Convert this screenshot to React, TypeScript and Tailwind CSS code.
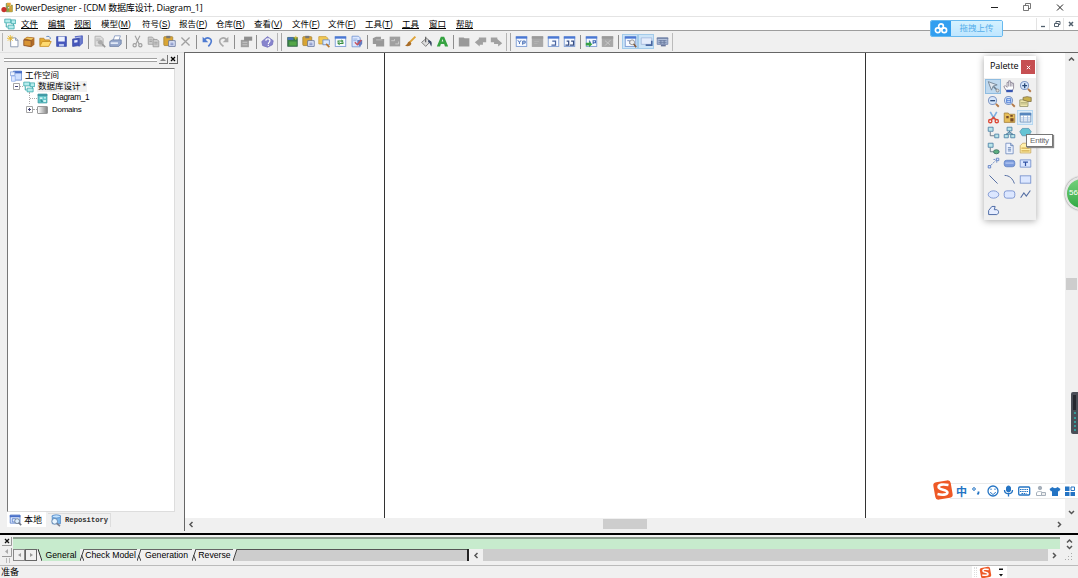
import type { ReactNode } from 'react';
import { clsx } from 'clsx';

const uiFont = "font-['Open_Sans','Noto_Sans_CJK_SC',sans-serif]";
const arial = "font-['Liberation_Sans','Noto_Sans_CJK_SC',sans-serif]";

function Svg({ children, size = 'w-[14px] h-[14px]' }: { children: ReactNode; size?: string }) {
  return (
    <svg viewBox="0 0 16 16" className={clsx('shrink-0', size)} fill="none">
      {children}
    </svg>
  );
}

const win = (inner: ReactNode, gray = false) => (
  <>
    <rect x="1.5" y="2" width="13" height="12" fill={gray ? '#a8a8a8' : '#f7faff'} stroke={gray ? '#a0a0a0' : '#6e91cf'} />
    <path d="M1 3.200h14" stroke={gray ? '#999' : '#4a78d4'} strokeWidth="2.600" />
    {inner}
  </>
);

const clipboard = (
  <>
    <rect x="1" y="2" width="11" height="11" rx="1" fill="#d9a534" stroke="#a5843a" />
    <path d="M4 1h5v3H4z" fill="#777" />
    <path d="M7 7h8v7H7z" fill="#e9efff" stroke="#5a6b96" />
    <path d="M9 10h4M9 12h4" stroke="#56a" />
  </>
);

const magnifier = (inner: ReactNode) => (
  <>
    <circle cx="6.800" cy="6.800" r="5" fill="#d5e6fb" stroke="#8098c4" strokeWidth="1.300" />
    <path d="M11 11l3.500 3.500" stroke="#b37a4a" strokeWidth="2.300" />
    {inner}
  </>
);

const icons: Record<string, ReactNode> = {
  // file group
  new: (
    <>
      <path d="M4.5 3.5h6l3 3v8h-9z" fill="#fff" stroke="#7c8ba8" />
      <path d="M10.5 3.5v3h3" stroke="#7c8ba8" />
      <path d="M4 0v8M0 4h8M1 1l6 6M7 1L1 7" stroke="#e8b51e" />
    </>
  ),
  project: (
    <>
      <path d="M1 5l4-3 9 1v9l-4 3-9-2z" fill="#b06c28" />
      <path d="M1 6l9 1v7l-9-1z" fill="#d99434" stroke="#8b532d" />
      <path d="M2 4l4-1 7 1-3 2z" fill="#efc65c" />
    </>
  ),
  open: (
    <>
      <path d="M1 13V4h5l1 2h6v3" fill="#e5ac32" stroke="#b9822c" />
      <path d="M1 14l3-6h11l-3 6z" fill="#ffdb70" stroke="#c58b20" />
      <path d="M9 2c3-1 5 0 5 3" stroke="#4779bd" />
    </>
  ),
  save: (
    <>
      <path d="M2 2h12v12H2z" fill="#4657bd" stroke="#4355ad" />
      <path d="M4 2h8v6H4z" fill="#eef3ff" />
      <path d="M5 11h6v3H5z" fill="#b9c6ee" />
    </>
  ),
  saveAll: (
    <>
      <path d="M5 2l9-1v9l-4 4z" fill="#6d7dcc" stroke="#4657bd" />
      <path d="M2 5l8-1v9l-8 1z" fill="#4657bd" stroke="#404fa2" />
      <path d="M4 6.500l4-.5v3l-4 .5z" fill="#e8edff" />
      <path d="M5 3.500l7-1" stroke="#c6d0f5" />
    </>
  ),
  preview: (
    <>
      <path d="M2.5 1.5h7l3 3v9h-10z" fill="#ddd" stroke="#aaa" />
      <path d="M4 5h5M4 7h3" stroke="#aaa" />
      <circle cx="9" cy="9" r="3" fill="#aaa" />
      <path d="M11 11l4 4" stroke="#999" strokeWidth="2" />
    </>
  ),
  print: (
    <>
      <path d="M5 7l2-6h7l-2 6z" fill="#fff" stroke="#7e93bd" />
      <path d="M1 8l3-2h11v5l-3 3H1z" fill="#97a9cd" stroke="#6d7fa4" />
      <path d="M2 10h9" stroke="#e6edf9" strokeWidth="2" />
    </>
  ),
  cutGray: (
    <>
      <path d="M5 1l5 10M11 1L6 11" stroke="#a0a0a0" strokeWidth="1.4" />
      <circle cx="4.5" cy="12.5" r="2" stroke="#a0a0a0" strokeWidth="1.5" />
      <circle cx="11.5" cy="12.5" r="2" stroke="#a0a0a0" strokeWidth="1.5" />
    </>
  ),
  copy: (
    <>
      <path d="M1.5 2.5h5l2 2v7h-7z" fill="#ccc" stroke="#a0a0a0" />
      <path d="M7.5 5.5h5l2 2v7h-7z" fill="#ccc" stroke="#979797" />
      <path d="M9 9h4M9 11h4M3 6h3M3 8h3" stroke="#999" />
    </>
  ),
  paste: clipboard,
  remove: <path d="M3 3l10 10M13 3L3 13" stroke="#a0a0a0" strokeWidth="1.6" />,
  undo: (
    <>
      <path d="M4 6c4-5 11-1 8 4-1 2-2 3-3 4" stroke="#4f7bd1" strokeWidth="2" />
      <path d="M2 2v7h7z" fill="#4f7bd1" />
    </>
  ),
  redo: (
    <>
      <path d="M12 6C8 1 1 5 4 10c1 2 3 3 4 4" stroke="#aaa" strokeWidth="2" />
      <path d="M14 2v7H7z" fill="#aaa" />
    </>
  ),
  properties: (
    <>
      <path d="M1 6h10v9H1z" fill="#a0a0a0" />
      <path d="M5 2h10v5H5z" fill="#8e8e8e" />
      <path d="M3 9h6M3 12h6" stroke="#ccc" />
    </>
  ),
  help: (
    <>
      <path d="M1 8l7-6 7 5-1 5-6 3-6-2z" fill="#8784cd" stroke="#7572be" />
      <path d="M6 7c0-3 5-3 5 0 0 2-2 2-2 4M9 12v1.5" stroke="#fff" strokeWidth="1.4" />
    </>
  ),
  // model group
  greenModel: (
    <>
      <path d="M2 3h12v11H2z" fill="#387e45" stroke="#416f56" />
      <path d="M4 8h9v5H4z" fill="#54a748" />
      <path d="M2 3h7v3H2z" fill="#4771bd" />
      <path d="M12 1v5M9.500 3.500h5" stroke="#e7c430" />
    </>
  ),
  folderSearch: (
    <>
      <path d="M1 2h9l2 2v7H1z" fill="#f2c955" stroke="#c99b35" />
      <path d="M6 6h8v6H6z" fill="#dceaff" stroke="#6489c5" />
      <path d="M10 11l4 4" stroke="#b67834" strokeWidth="2" />
    </>
  ),
  refresh: win(
    <>
      <path d="M5 9.500V7.500h4M11 8.500v2H7" stroke="#368d3b" strokeWidth="1.300" />
      <path d="M9 5.500l3 2-3 2zM7 8.500l-3 2 3 2z" fill="#368d3b" />
    </>,
  ),
  check: (
    <>
      <path d="M2.5 1.5h8l2 2v11h-10z" fill="#dbe7ff" stroke="#6f93d2" />
      <path d="M4 5h5M4 7h4" stroke="#88a8dc" />
      <path d="M9 6h6v5l-3 3-3-3z" fill="#637dc2" />
      <path d="M6 9l3 3 5-6" stroke="#c7545f" strokeWidth="1.800" />
    </>
  ),
  grayStack: (
    <>
      <path d="M1 4l4-2h6v3h4v9H5v-3H1z" fill="#989898" />
      <path d="M5 6h8" stroke="#c5c5c5" />
    </>
  ),
  grayImage: (
    <>
      <path d="M2 2h13v12H2z" fill="#a0a0a0" />
      <path d="M4 7h4V5M9 11h4V8" stroke="#d4d4d4" />
    </>
  ),
  brush: (
    <>
      <path d="M14 2L6 10" stroke="#dfa338" strokeWidth="2.5" />
      <path d="M7 8c-3 0-2 4-6 5 4 2 8 0 8-3z" fill="#a96d28" />
    </>
  ),
  bucket: (
    <>
      <path d="M2 9l6-5 5 4-6 6z" fill="#ddd" stroke="#666" />
      <path d="M7 9V2" stroke="#555" strokeWidth="1.300" />
      <path d="M10 6c5 1 5 4 4 8-2-2-1-4-4-5z" fill="#3f4c68" />
    </>
  ),
  letterA: <path d="M1 14L6 2h4l5 12h-4l-1-3H6l-1 3zM7 8h2L8 5z" fill="#36a342" />,
  grayFolder: <path d="M1 3h6l1 1h6v10H1z" fill="#999" />,
  grayLeft: <path d="M6 3h9v6h-4v3H7v2L1 9l5-4z" fill="#a1a1a1" />,
  grayRight: <path d="M1 3h8v2l6 5-5 4v-3H5V9H1z" fill="#a1a1a1" />,
  // view group
  viewTree: win(<path d="M3.500 6.500l2 2.500v2M7.500 6.500l-2 2.500M9.500 12V7.500h3v2.500h-3" stroke="#3d66b2" strokeWidth="1.200" />),
  viewGray: win(<path d="M4 8h6M4 10.500h4" stroke="#b5b5b5" />, true),
  viewPage: win(<path d="M6.500 7.500h4v5h-5M5.500 12.500" stroke="#4964a1" strokeWidth="1.500" />),
  viewPages: win(<path d="M3 12.500h4v-5H4.500M8.500 12.500h4.500v-5h-3" stroke="#364d83" strokeWidth="1.500" />),
  viewGreen: win(
    <>
      <path d="M5 7l2 2.500M10 11V7h3v2.500h-3" stroke="#3d66b2" strokeWidth="1.300" />
      <path d="M1 9.500h4V8l4 3.500L5 15v-2H1z" fill="#37a147" />
    </>,
  ),
  viewCross: win(<path d="M5 7l6 5M12 6l-7 7" stroke="#ccc" />, true),
  viewSearch: win(
    <>
      <path d="M4 7h3v4" stroke="#637fb7" />
      <circle cx="10" cy="9" r="3" fill="#eee" stroke="#888" />
      <path d="M12 11l3 4" stroke="#835b3c" strokeWidth="2" />
    </>,
  ),
  viewOutput: (
    <>
      <path d="M1.5 3.5h13v8h-13z" fill="#e4ecfb" stroke="#a0b5da" />
      <path d="M7 12.5h7.5V7" stroke="#49679f" strokeWidth="2" />
    </>
  ),
  viewGrid: (
    <>
      <path d="M1.5 3.5h13v8h-13z" fill="#b4c2dc" stroke="#6a7da8" />
      <path d="M1 4h14M3 7h10M3 9.500h10M6 6v5M10 6v5" stroke="#6c7da1" strokeWidth="1.300" />
      <path d="M6 13h6" stroke="#68769a" strokeWidth="2" />
    </>
  ),
  // palette
  pointer: (
    <>
      <path d="M1.500 2l11 4-5 1.500-2 5z" fill="#dfe6ee" stroke="#6b7b8c" />
      <path d="M8 8l4 4" stroke="#6b7b8c" strokeWidth="2" />
      <circle cx="13" cy="13" r="1.800" fill="#ddd" stroke="#888" />
    </>
  ),
  hand: (
    <>
      <path d="M4 13L1 8l2-1 2 2V3h2V1h2v2h2v1h2v6l-2 4z" fill="#fff" stroke="#847c8f" />
      <path d="M7 3v5M9 3v5M11 4v4" stroke="#847c8f" />
      <path d="M4 12h8v3H4z" fill="#3655b0" />
    </>
  ),
  zoomIn: magnifier(<path d="M4 7h6M7 4v6" stroke="#274878" strokeWidth="1.6" />),
  zoomOut: magnifier(<path d="M4 7h6" stroke="#274878" strokeWidth="1.6" />),
  zoomDiagram: magnifier(<path d="M4.5 4.5h5v5h-5zM4.500 7h5" stroke="#3c6ed0" />),
  sheet: (
    <>
      <path d="M1 6h10v8H1z" fill="#fbf1b6" stroke="#88865a" />
      <path d="M2 9h8M2 11h8" stroke="#9b9b67" />
      <path d="M5 3l5-1 5 1v5h-4L5 6z" fill="#c8b04c" stroke="#847246" />
    </>
  ),
  scissors: (
    <>
      <path d="M4 1l5 9M12 1L7 10" stroke="#7caee0" strokeWidth="2" />
      <circle cx="4" cy="12.5" r="2" stroke="#dc4a37" strokeWidth="1.7" />
      <circle cx="12" cy="12.5" r="2" stroke="#dc4a37" strokeWidth="1.7" />
      <path d="M5 11l3-3 3 3" stroke="#dc4a37" strokeWidth="2" />
    </>
  ),
  package: (
    <>
      <path d="M1.500 2.500h5l1 1.500h7v10h-13z" fill="#e7be58" stroke="#a2803c" />
      <path d="M4 6h3v3H4zM9 9h4v4H9zM9 5h3v2H9z" fill="#754b2a" />
    </>
  ),
  entity: (
    <>
      <path d="M1.5 2.5h13v11h-13z" fill="#fff" stroke="#6287b2" />
      <path d="M1 4h14" stroke="#5585bd" strokeWidth="3" />
      <path d="M2 8.5h12M2 11h12M5.5 5v9M10.5 5v9" stroke="#9fb9dc" />
    </>
  ),
  relation: (
    <>
      <path d="M1.500 1.500h6v5h-6zM9.500 10h5v4.500h-5z" fill="#b9e5ea" stroke="#467da2" />
      <path d="M4 7v5h5" stroke="#567" />
    </>
  ),
  inherit: (
    <>
      <path d="M5 1.500h6v4.500H5zM1.500 10.500h5v4h-5zM9.500 10.500h5v4h-5z" fill="#b9e5ea" stroke="#467da2" />
      <path d="M8 6v2M4 10l4-3 4 3z" stroke="#477192" fill="#9fd1dd" />
    </>
  ),
  association: <path d="M1 7l3-4h8l3 4-3 5H4z" fill="#66c4d3" stroke="#5a98b5" />,
  assocLink: (
    <>
      <path d="M1.500 1.500h6v5h-6z" fill="#b9e5ea" stroke="#467da2" />
      <path d="M4 7v5h4" stroke="#567" />
      <ellipse cx="11.500" cy="12" rx="3.500" ry="2.500" fill="#5daf7f" stroke="#386e61" />
    </>
  ),
  file: (
    <>
      <path d="M3.500 1.500h6l3 3v10h-9z" fill="#edf3ff" stroke="#6f8abc" />
      <path d="M9.500 1.500v3h3M6 7h4M6 9h4M6 11h4" stroke="#5877ac" />
    </>
  ),
  note: (
    <>
      <path d="M1.500 4.500l3-3h10v12h-13z" fill="#fff0aa" stroke="#c8a860" />
      <path d="M3 7.500h10M3 11h10" stroke="#d3ab4b" strokeWidth="1.500" />
    </>
  ),
  link: (
    <>
      <path d="M3 12l8-8M8 3h4v4" stroke="#5578bd" strokeDasharray="2 1" />
      <path d="M1.500 10.500h3v3h-3zM11.500 1.500h3v3h-3z" fill="#dbe7ff" stroke="#5578bd" />
    </>
  ),
  title: (
    <>
      <rect x="1.500" y="4" width="13" height="8" rx="3" fill="#7d9cdd" stroke="#5d80c4" />
      <path d="M3 7.500h10" stroke="#b7caf3" strokeWidth="1.500" />
    </>
  ),
  text: (
    <>
      <path d="M1.500 3.500h13v9h-13z" fill="#dae6ff" stroke="#6e8cc9" />
      <path d="M5 6.200h6M8 6v5" stroke="#3154a5" strokeWidth="1.500" />
    </>
  ),
  line: <path d="M3 3l10 10" stroke="#536da2" strokeWidth="1.200" />,
  arc: <path d="M2 3c6 0 10 4 12 10" stroke="#536da2" strokeWidth="1.200" />,
  rect: <rect x="1.500" y="3.500" width="13" height="9" fill="#dce7ff" stroke="#6f8acb" />,
  ellipse: <ellipse cx="8" cy="8" rx="6.500" ry="4.500" fill="#dce7ff" stroke="#6f8acb" />,
  rounded: <rect x="1.500" y="3.500" width="13" height="9" rx="3" fill="#dce7ff" stroke="#6f8acb" />,
  polyline: <path d="M2 12l4-6 3 4 5-7" stroke="#536da2" strokeWidth="1.300" />,
  polygon: <path d="M2 13V8l4-5h4l-1 4h3c3 1 3 5 0 6z" fill="#e6edff" stroke="#4c6aa5" strokeWidth="1.200" />,
  // tree
  workspace: (
    <>
      <path d="M4.500 1.500h11v12h-11z" fill="#cfe0ff" stroke="#557dca" />
      <path d="M4 3h12" stroke="#496fc7" strokeWidth="3" />
      <path d="M.5 2.500h6v5h-6z" fill="#eef4ff" stroke="#7f9cd6" />
      <path d="M2 8h5v7H2z" fill="#dfe9ff" stroke="#8cadec" />
    </>
  ),
  model: (
    <>
      <path d="M1 1.500h8v5H1zM9.500 2.500h6v5h-6zM5.500 9.500h8v5h-8z" fill="#b4ecec" stroke="#35a5a8" />
      <path d="M3 7v5h2M12.500 8v2" stroke="#35a5a8" strokeWidth="1.300" />
    </>
  ),
  diagram: (
    <>
      <path d="M1.500 1.500h13v13h-13z" fill="#60c4c8" stroke="#3d97a0" />
      <path d="M1 3h14" stroke="#378d9b" strokeWidth="2" />
      <path d="M4 6h4v3H4zM9 10h4v3H9zM10 6h3v2h-3z" fill="#d0f6f6" />
      <path d="M6 9v3h3" stroke="#176d77" />
    </>
  ),
  repository: (
    <>
      <path d="M4 2h10v10H4z" fill="#7db8ec" stroke="#4c85c6" />
      <ellipse cx="9" cy="3" rx="5" ry="2" fill="#c4e4ff" stroke="#4c85c6" />
      <circle cx="7" cy="9" r="3.500" fill="#e9f5ff" stroke="#567ca8" />
      <path d="M9.500 11.500l4 3.500" stroke="#7c8190" strokeWidth="2" />
    </>
  ),
};

// Numbers are separator widths, '|' is a double grip
const toolbar: (string | number)[] = [
  'new', 'project', 'open', 'save', 'saveAll', 6, 'preview', 'print', 6, 'cutGray', 'copy', 'paste', 'remove', 6,
  'undo', 'redo', 7, 'properties', 5, 'help', '|', 'greenModel', 'paste', 'folderSearch', 'refresh', 'check', 6,
  'grayStack', 'grayImage', 'brush', 'bucket', 'letterA', 6, 'grayFolder', 'grayLeft', 'grayRight', '|',
  'viewTree', 'viewGray', 'viewPage', 'viewPages', 6, 'viewGreen', 'viewCross', 7, 'viewSearch', 'viewOutput', 'viewGrid',
];

const menus = [
  { label: '文件', width: 'w-[27px]' },
  { label: '编辑', width: 'w-[26px]' },
  { label: '视图', width: 'w-[27px]' },
  { label: '模型', hotkey: 'M', width: 'w-[41px]' },
  { label: '符号', hotkey: 'S', width: 'w-[37px]' },
  { label: '报告', hotkey: 'P', width: 'w-[37px]' },
  { label: '仓库', hotkey: 'R', width: 'w-[38px]' },
  { label: '查看', hotkey: 'V', width: 'w-[38px]' },
  { label: '文件', hotkey: 'F', width: 'w-[36px]' },
  { label: '文件', hotkey: 'F', width: 'w-[37px]' },
  { label: '工具', hotkey: 'T', width: 'w-[37px]' },
  { label: '工具', width: 'w-[27px]' },
  { label: '窗口', width: 'w-[27px]' },
  { label: '帮助', width: 'w-[27px]' },
];

const paletteTools = [
  'pointer', 'hand', 'zoomIn', 'zoomOut', 'zoomDiagram', 'sheet', 'scissors', 'package', 'entity',
  'relation', 'inherit', 'association', 'assocLink', 'file', 'note', 'link', 'title', 'text',
  'line', 'arc', 'rect', 'ellipse', 'rounded', 'polyline', 'polygon',
];

const outputTabs = [
  { label: 'General', width: 'w-[38px]', active: true },
  { label: 'Check Model', width: 'w-[53px]' },
  { label: 'Generation', width: 'w-[51px]' },
  { label: 'Reverse', width: 'w-[37px]' },
];

function TitleBar() {
  return (
    <header className="h-4 flex items-center bg-white pl-[1px]">
      <Svg size="w-[12px] h-[12px]">
        <path d="M7 2h4v4H9v3h5V4h1v9H7z" fill="#8aa848" stroke="#7c8e45" />
        <circle cx="4" cy="10" r="3.500" fill="#c8322c" />
        <path d="M8 1h5v4H8z" fill="#e4a73b" />
        <path d="M11 5h4v8h-4z" fill="#cfa236" />
      </Svg>
      <h1 className={clsx(uiFont, 'ml-[2px] text-[9px] tracking-[-0.18px] leading-4 text-black whitespace-nowrap')}>
        PowerDesigner - [CDM 数据库设计, Diagram_1]
      </h1>
      <div className="ml-auto flex w-[88px] items-center">
        <svg viewBox="0 0 88 16" className="w-[88px] h-4" fill="none" stroke="#222">
          <path d="M1 7.5h7" />
          <path d="M33.500 5.500h5v5h-5zM35.500 5.500v-2h5v5h-2" stroke="#555" strokeWidth=".8" />
          <path d="M67 4.500l6 6M73 4.500l-6 6" />
        </svg>
      </div>
    </header>
  );
}

function MenuBar() {
  return (
    <nav className="h-[14px] flex items-center bg-white border-t border-[#e4e4e4] pl-1">
      <Svg size="w-[12px] h-[12px]">{icons.model}</Svg>
      <div className={clsx(arial, 'ml-[5px] flex text-[8.5px] leading-[12px] text-black')}>
        {menus.map((menu, i) => (
          <span key={i} className={clsx('shrink-0 whitespace-nowrap', menu.width)}>
            {menu.hotkey ? (
              <>
                {menu.label}(<u>{menu.hotkey}</u>)
              </>
            ) : (
              <u>{menu.label}</u>
            )}
          </span>
        ))}
      </div>
      <svg viewBox="0 0 42 12" className="ml-auto w-[42px] h-3" fill="none" stroke="#52606d">
        <path d="M.5 0v12M13.500 0v12M27.500 0v12" stroke="#e3e3e3" />
        <path d="M5 8.500h4" strokeWidth="1.300" />
        <path d="M18.500 5.500h4v3h-4zM20 5V3.500h4v3h-1" />
        <path d="M33 4l4 4M37 4l-4 4" strokeWidth="1.500" />
      </svg>
    </nav>
  );
}

function Toolbar() {
  return (
    <div className="h-[22px] flex items-center bg-[#f0f0f0] border-t border-[#9d9d9d]">
      <span className="w-[5px] h-[18px] flex gap-[2px] pl-[2px]">
        <i className="w-px bg-[#b5b5b5]" />
      </span>
      {toolbar.map((item, i) => {
        if (item === '|') {
          return (
            <span key={i} className="w-[9px] h-[18px] shrink-0 flex justify-center gap-[3px]">
              <i className="w-px bg-[#b5b5b5]" />
              <i className="w-px bg-[#a5a5a5]" />
            </span>
          );
        }
        if (typeof item === 'number') {
          return (
            <span key={i} className="h-[14px] shrink-0 flex justify-center" style={{ width: item }}>
              <i className="w-px bg-[#8e8e8e]" />
            </span>
          );
        }
        const active = item === 'viewSearch' || item === 'viewOutput';
        return (
          <button
            key={i}
            className={clsx(
              'w-4 h-[15px] shrink-0 flex items-center justify-center',
              active && 'bg-[#cce4f7] border border-[#a3cbea]',
            )}
          >
            <Svg size="w-[13px] h-[13px]">{icons[item]}</Svg>
          </button>
        );
      })}
      <i className="ml-[2px] w-px h-[18px] bg-[#bbb]" />
    </div>
  );
}

function Browser() {
  return (
    <aside className="w-[184px] shrink-0 flex flex-col bg-[#f0f0f0] border-t border-[#e0e0e0] pl-[7px] pr-[9px]">
      <div className="h-[15px] shrink-0 flex items-center -ml-[3px] -mr-[6px]">
        <div className="w-[153px] h-[4px] mt-[-1px] border-y border-[#a0a0a0] bg-white" />
        <div className="ml-[2px] w-[9px] h-[9px] mt-[-2px] flex items-center justify-center bg-[#eee] border-r border-b border-[#777]">
          <svg viewBox="0 0 6 6" className="w-[6px] h-[6px]"><path d="M0 5l3-3 3 3z" fill="#888" /></svg>
        </div>
        <div className="ml-[1px] w-[9px] h-[9px] mt-[-2px] flex items-center justify-center bg-[#eee] border-r border-b border-[#666]">
          <svg viewBox="0 0 6 6" className="w-[6px] h-[6px]"><path d="M1 1l4 4M5 1L1 5" stroke="#000" strokeWidth="1.300" /></svg>
        </div>
      </div>

      <div className={clsx(arial, 'w-[168px] h-[444px] shrink-0 bg-white border-l border-t border-[#777] border-b border-r border-r-[#ddd] border-b-[#ddd] text-[8.5px] text-black pt-[1px]')}>
        <div className="h-[11px] flex items-center pl-[2px] gap-[3px]">
          <Svg size="w-[12px] h-[12px]">{icons.workspace}</Svg>
          <span className="leading-[11px]">工作空间</span>
        </div>
        <div className="h-[11px] flex items-center pl-[5px]">
          <Expander open />
          <i className="w-[3px] border-t border-dotted border-[#aaa]" />
          <Svg size="w-[12px] h-[12px]">{icons.model}</Svg>
          <span className="ml-[2px] px-[1px] leading-[11px] bg-[#f0f0f0] whitespace-nowrap">数据库设计 *</span>
        </div>
        <div className="h-[12px] flex items-center pl-[21px]">
          <i className="w-px h-[12px] border-l border-dotted border-[#aaa]" />
          <i className="w-[7px] border-t border-dotted border-[#aaa]" />
          <Svg size="w-[11px] h-[11px]">{icons.diagram}</Svg>
          <span className="ml-[4px] text-[8.2px] leading-[12px] tracking-[-0.3px]">Diagram_1</span>
        </div>
        <div className="h-[11px] flex items-center pl-[18px]">
          <Expander />
          <i className="w-[4px] border-t border-dotted border-[#aaa]" />
          <i className="w-[11px] h-[8px] border border-[#999] bg-linear-to-r from-white to-[#888] rounded-[1px]" />
          <span className="ml-[4px] text-[8px] leading-[11px] tracking-[-0.3px]">Domains</span>
        </div>
      </div>

      <div className="h-[15px] flex items-center">
        <div className={clsx(arial, 'w-[39px] h-[15px] shrink-0 flex items-center gap-[2px] pl-[2px] bg-white text-[9px] leading-[14px]')}>
          <Svg size="w-[13px] h-[13px]">
            <path d="M1.500 2.500h12v10h-12z" fill="#e3eeff" stroke="#557dca" />
            <path d="M1 4h13" stroke="#496fc7" strokeWidth="2.500" />
            <path d="M4 7h4v4H4z" stroke="#557dca" />
            <circle cx="10" cy="10" r="3" fill="#def" stroke="#678" />
            <path d="M12 12l3 3" stroke="#6d7585" strokeWidth="2" />
          </Svg>
          本地
        </div>
        <div className="ml-[2px] w-[63px] h-[14px] shrink-0 flex items-center gap-[3px] pl-[1px] border-r border-t border-[#ddd] font-['Liberation_Mono',monospace] text-[7.2px] font-semibold leading-[10px] text-[#333]">
          <Svg size="w-[13px] h-[13px]">{icons.repository}</Svg>
          Repository
        </div>
      </div>
    </aside>
  );
}

function Expander({ open = false }: { open?: boolean }) {
  return (
    <svg viewBox="0 0 7 7" className="w-[7px] h-[7px] shrink-0" fill="#fff" stroke="#a5a5a5">
      <path d="M.5 .5h6v6h-6z" />
      <path d={open ? 'M2 3.5h3' : 'M2 3.5h3M3.5 2v3'} stroke="#447" />
    </svg>
  );
}

function Chevron({ dir }: { dir: 'left' | 'right' | 'up' | 'down' }) {
  const paths = { left: 'M5.500 2L3 4.500 5.500 7', right: 'M3 2l2.500 2.500L3 7', up: 'M2 5.500L4.500 3 7 5.500', down: 'M2 3l2.500 2.500L7 3' };
  return (
    <svg viewBox="0 0 9 9" className="w-[9px] h-[9px] shrink-0" fill="none" stroke="#555" strokeWidth="1.500">
      <path d={paths[dir]} />
    </svg>
  );
}

function Canvas() {
  return (
    <main className="flex-1 min-w-0 flex flex-col bg-white border-l border-t border-[#666]">
      <div className="flex-1 flex">
        <div className="w-[199px] shrink-0" />
        <div className="w-[482px] shrink-0 border-x border-[#333]" />
        <div className="flex-1" />
        <div className="w-[13px] bg-[#f0f0f0] flex flex-col items-center justify-between pt-[2px] pb-[1px]">
          <Chevron dir="up" />
          <div className="w-[11px] h-[12px] mt-[-4px] bg-[#cdcdcd]" />
          <Chevron dir="down" />
        </div>
      </div>
      <div className="h-[13px] shrink-0 flex items-center bg-[#f0f0f0] pl-[2px] pr-[14px]">
        <Chevron dir="left" />
        <div className="ml-[407px] w-[44px] h-[10px] mt-[-2px] bg-[#cdcdcd]" />
        <div className="ml-auto">
          <Chevron dir="right" />
        </div>
      </div>
    </main>
  );
}

function TabEdge({ last }: { last: boolean }) {
  return (
    <svg viewBox="0 0 4 12" className="w-[4px] h-[12px] shrink-0" fill="none">
      {last && <path d="M4 0v12H0z" fill="#cdcdcd" />}
      <path d={last ? 'M0 12L4 0' : 'M0 12L4 0M1.500 6l2.500 6'} stroke="#444" />
    </svg>
  );
}

function Output() {
  return (
    <section className="h-[32px] flex border-t-2 border-black bg-[#f0f0f0]">
      <div className="w-[13px] shrink-0 flex flex-col items-center pt-[2px]">
        <svg viewBox="0 0 10 26" className="w-[10px] h-[26px]" fill="none">
          <path d="M0 8.500h9.500V0M0 19.500h9.500V11" stroke="#999" />
          <path d="M3 2l4 4M7 2L3 6" stroke="#111" strokeWidth="1.300" />
          <path d="M6 12v5l-3-2.500z" fill="#aaa" />
          <path d="M4.500 21v5M7.500 21v5" stroke="#bbb" />
        </svg>
      </div>
      <div className="w-[1047px] shrink-0 flex flex-col">
        <div className="h-[12px] shrink-0 mt-[2px] bg-[#c7ebcd] border-t-2 border-[#8c9d8e]" />
        <div className="h-[12px] flex bg-[#cdcdcd]">
          <div className="w-[456px] shrink-0 flex border-r-2 border-[#222]">
            <button className="w-[12px] shrink-0 flex items-center justify-center bg-[#f0f0f0] border border-[#888]">
              <svg viewBox="0 0 5 6" className="w-[5px] h-[6px]"><path d="M4 1v4L1 3z" fill="#999" /></svg>
            </button>
            <button className="w-[12px] shrink-0 flex items-center justify-center bg-[#f0f0f0] border border-[#666]">
              <svg viewBox="0 0 5 6" className="w-[5px] h-[6px]"><path d="M1 1v4l3-2z" fill="#999" /></svg>
            </button>
            <div className="flex bg-[#f0f0f0]">
              <svg viewBox="0 0 5 12" className="w-[5px] h-[12px]">
                <path d="M1 0h4v12z" fill="#c7ebcd" />
                <path d="M1 0l4 12" stroke="#333" />
              </svg>
              {outputTabs.map((tab, i) => (
                <div key={tab.label} className="flex">
                  <div className={clsx('h-[12px] shrink-0 flex items-center', tab.active ? 'bg-[#c7ebcd]' : 'border-t border-[#666]')}>
                    <span className={clsx(arial, 'text-[8.7px] leading-[11px] text-center whitespace-nowrap text-black', tab.width)}>
                      {tab.label}
                    </span>
                  </div>
                  <TabEdge last={i === outputTabs.length - 1} />
                </div>
              ))}
            </div>
            <div className="flex-1 border-t border-[#555]" />
          </div>
          <div className="w-[14px] shrink-0 bg-[#f0f0f0] flex items-center justify-center">
            <Chevron dir="left" />
          </div>
          <div className="ml-auto w-[12px] bg-[#f0f0f0] flex items-center justify-center">
            <Chevron dir="right" />
          </div>
        </div>
      </div>
      <div className="flex-1 flex flex-col items-center pt-[2px]">
        <div className="h-[6px] overflow-hidden"><Chevron dir="up" /></div>
        <div className="h-[8px]"><Chevron dir="down" /></div>
        <svg viewBox="0 0 8 8" className="mt-[2px] w-[8px] h-[8px]" fill="#aaa">
          <path d="M6 0h1v1H6zM3 3h1v1H3zM6 3h1v1H6zM0 6h1v1H0zM3 6h1v1H3zM6 6h1v1H6z" />
        </svg>
      </div>
    </section>
  );
}

function SogouLogo({ size }: { size: string }) {
  return (
    <svg viewBox="0 0 20 20" className={clsx('shrink-0', size)} fill="none">
      <rect x="2" y="2" width="16" height="16" rx="3" fill="#ee5926" transform="rotate(-10 10 10)" />
      <path d="M15 5.500c-5-1-9-.5-9 1.700 0 3 8 2 8 5 0 2.300-5 2.500-9 1.500" stroke="#fff" strokeWidth="2.400" />
    </svg>
  );
}

function StatusBar() {
  return (
    <footer className="h-[13px] flex items-center bg-[#f0f0f0] border-t border-[#bbb]">
      <span className={clsx(arial, 'pl-[1px] w-[972px] text-[9px] leading-[12px] text-black')}>准备</span>
      <div className="w-[35px] h-[13px] mb-[-1px] flex items-center bg-white pl-[2px]">
        <i className="w-[3px] h-[12px] border-x border-dotted border-[#ddd]" />
        <div className="ml-[2px] flex"><SogouLogo size="w-[13px] h-[13px]" /></div>
        <svg viewBox="0 0 5 9" className="ml-[7px] w-[5px] h-[9px]" fill="#111">
          <path d="M0 2h4V.5H0zM0 6h4L2 8.500z" />
        </svg>
      </div>
    </footer>
  );
}

function Palette() {
  return (
    <div className="absolute left-[984px] top-[56px] w-[52px] h-[164px] bg-[#f0f0f0] shadow-[0_1px_7px_rgba(0,0,0,0.35)]">
      <div className="h-[22px] flex items-center bg-white pl-[6px] pr-[1px]">
        <span className={clsx(uiFont, 'text-[9px] tracking-[-0.1px] leading-5 text-black mt-[-2px]')}>Palette</span>
        <span className="ml-auto w-[14px] h-[14px] flex items-center justify-center bg-[#c64f52]">
          <svg viewBox="0 0 6 6" className="w-[5px] h-[5px]"><path d="M1 1l4 4M5 1L1 5" stroke="#fff" strokeWidth="1.200" /></svg>
        </span>
      </div>
      <div className="grid grid-cols-[16px_16px_16px] auto-rows-[15.5px] pl-[1px] pt-[0.5px]">
        {paletteTools.map((tool) => (
          <button
            key={tool}
            className={clsx(
              'flex items-center justify-center',
              tool === 'pointer' && 'bg-[#bfd9ef] border border-[#8fbce0]',
              tool === 'entity' && 'bg-[#dcecf9] border border-[#b5d7f1]',
            )}
          >
            <Svg size="w-[13px] h-[13px]">{icons[tool]}</Svg>
          </button>
        ))}
      </div>
      <div className={clsx(arial, 'absolute left-[42px] top-[78px] w-[27px] h-[13px] flex items-center justify-center bg-white border border-[#777] shadow-[1px_1px_1px_#888] text-[8px] leading-[10px] tracking-[-0.2px] text-[#666]')}>
        Entity
      </div>
    </div>
  );
}

function UploadBadge() {
  return (
    <div className="absolute left-[930px] top-[20px] w-[73px] h-[17px] flex rounded-[2px] border border-[#67b9ef] overflow-hidden">
      <div className="w-[20px] flex items-center justify-center bg-[#329ff0]">
        <svg viewBox="0 0 16 14" className="w-[14px] h-[13px]" fill="none" stroke="#fff" strokeWidth="1.900">
          <circle cx="8" cy="4.500" r="2.700" />
          <circle cx="4.300" cy="9" r="2.700" />
          <circle cx="11.700" cy="9" r="2.700" />
        </svg>
      </div>
      <div className={clsx(arial, 'flex-1 text-center bg-linear-to-b from-[#d5f2ff] to-[#bfe6ff] text-[8.5px] leading-[15px] text-[#55aeea]')}>
        拖拽上传
      </div>
    </div>
  );
}

function ImeBar() {
  return (
    <div className="absolute left-[932px] top-[480px] w-[146px] h-[20px] flex items-center">
      <div className="relative z-10 flex"><SogouLogo size="w-[22px] h-[22px]" /></div>
      <div className="-ml-[4px] flex-1 h-[16px] mt-[2px] flex items-center bg-white border-y border-[#eaeaea] pl-[6px]">
        <span className="w-[12px] font-['Noto_Sans_CJK_SC',sans-serif] font-bold text-[11px] leading-[14px] text-[#2474c4]">中</span>
        <svg viewBox="0 0 116 14" className="w-[116px] h-[14px]" fill="none" stroke="#2474c4">
          <circle cx="6" cy="5" r="1.300" />
          <path d="M10.500 7.500v1.500l-1 1.500" strokeWidth="1.800" />
          <circle cx="25" cy="7" r="5" strokeWidth="1.300" />
          <path d="M22.500 8c1 3 4 3 5 0M23 4.500v1.500M27 4.500v1.500" />
          <rect x="38.500" y="2" width="4" height="6" rx="2" fill="#2474c4" />
          <path d="M36.500 6c0 5 8 5 8 0M40.500 10v2.500" strokeWidth="1.300" />
          <rect x="50.700" y="3" width="11" height="8" rx="1" strokeWidth="1.300" />
          <path d="M52 5.500h8M52 7.500h8M53.500 9.500h5" strokeDasharray="1.500 .7" />
          <g stroke="#a6b0bb" fill="#a6b0bb">
            <circle cx="72" cy="4" r="1.700" />
            <path d="M68.500 11.500V9c0-2 6-2 6 0v2.500z" fill="#fff" />
            <path d="M73.500 8.500h4v3h-4z" fill="#eee" />
          </g>
          <path d="M84.500 3l-3 2 1.500 2.500 1-.5v5h6V7l1 .5L92.500 5l-3-2c-1 1.500-4 1.500-5 0z" fill="#2474c4" stroke="none" />
          <path d="M97 2.500h4.500V7H97zM97 8h4.500v4H97zM102.500 8h4.500v4h-4.500z" fill="#2474c4" stroke="none" />
          <path d="M103 3h3.500v3.500H103z" />
        </svg>
      </div>
    </div>
  );
}

function EdgeWidgets() {
  return (
    <>
      <div className="absolute right-[-20px] top-[177px] w-[33px] h-[33px] rounded-full border-2 border-[#e5e5e5] bg-linear-to-b from-[#75d17c] to-[#2ea943] shadow-[0_0_2px_#555] text-white font-['Liberation_Sans',sans-serif] text-[8px] leading-[27px] pl-[2px]">
        56
      </div>
      <div className="absolute left-[1071px] top-[392px] w-[7px] h-[42px] rounded-l-[2px] bg-[#4a4e57] flex flex-col items-center py-[3px]">
        <i className="w-[3px] h-[15px] bg-[#25282f]" />
        <i className="mt-[2px] w-0 h-[19px] border-l-2 border-dotted border-[#369a99]" />
      </div>
    </>
  );
}

export default function App() {
  return (
    <div className="relative w-[1078px] h-[578px] overflow-hidden flex flex-col bg-[#f0f0f0]">
      <TitleBar />
      <MenuBar />
      <Toolbar />
      <div className="h-[479px] shrink-0 flex">
        <Browser />
        <Canvas />
      </div>
      <div className="h-[2px] shrink-0 bg-[#f0f0f0]" />
      <Output />
      <StatusBar />
      <UploadBadge />
      <Palette />
      <EdgeWidgets />
      <ImeBar />
    </div>
  );
}
